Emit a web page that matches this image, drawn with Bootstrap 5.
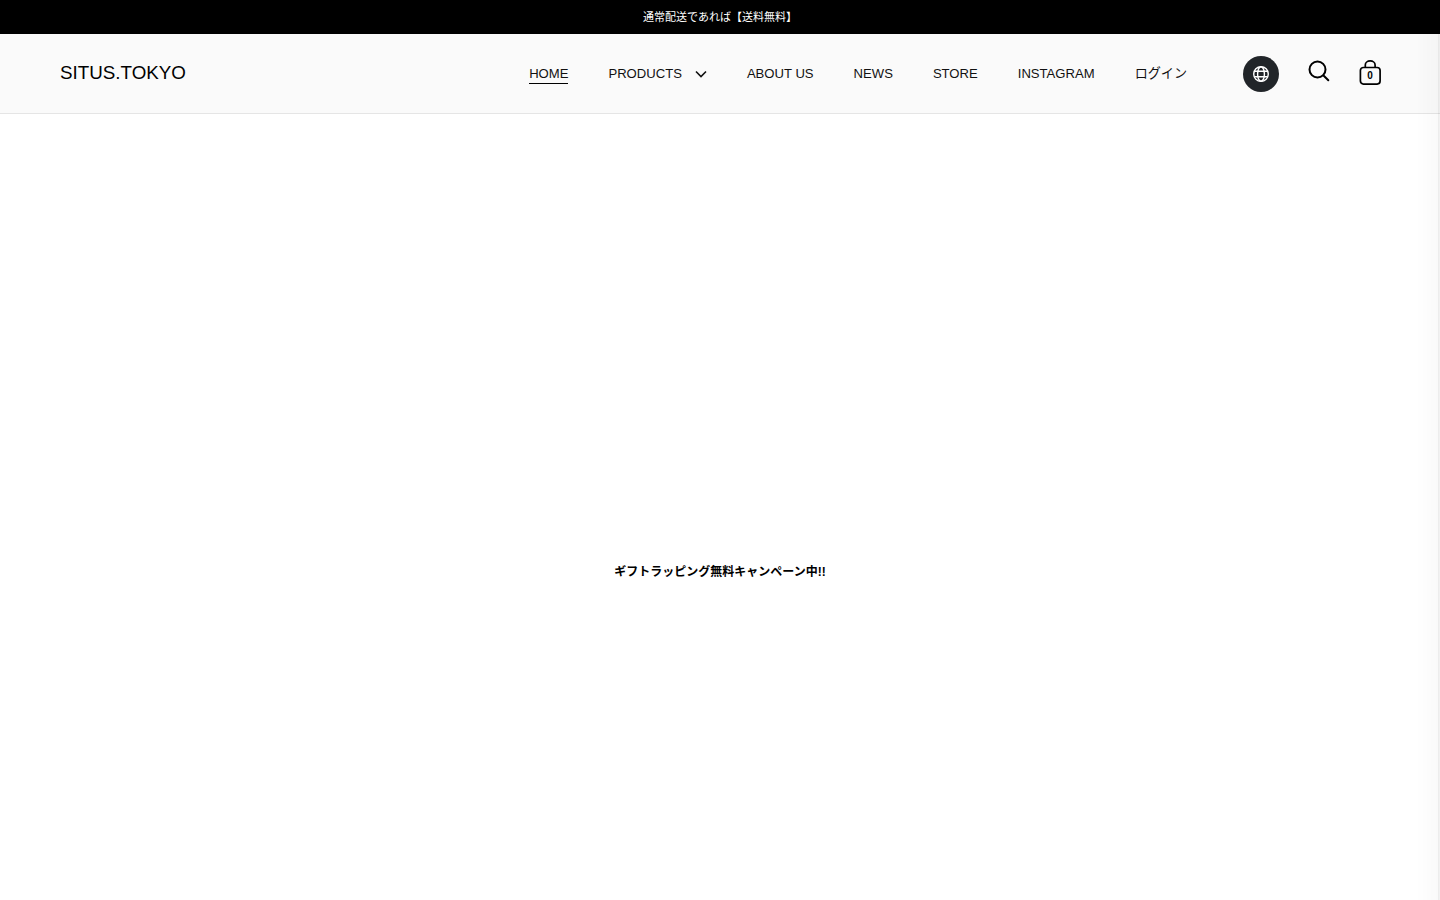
<!doctype html>
<html lang="ja"><head><meta charset="utf-8">
<link href="https://cdn.jsdelivr.net/npm/bootstrap@5.3.0/dist/css/bootstrap.min.css" rel="stylesheet">
<style>
html,body{height:100%}
body{font-family:"Liberation Sans","Noto Sans CJK JP",sans-serif;color:#000;background:#fff;overflow:hidden}
.promo{height:34px;background:#000;color:#fff;font-size:11px;line-height:33px;padding-top:1px}
.mast{height:80px;background:#fafafa;border-bottom:1px solid #e5e5e5;padding:0 58px 0 60px}
.logo{font-size:18.8px;color:#000;text-decoration:none;margin-top:-1px}
.menu{gap:40px;font-size:13.1px;margin-right:56px;margin-top:1px}
.menu a{color:#111;text-decoration:none;line-height:18px;display:inline-block;border-bottom:1px solid transparent}
.menu a.on{border-bottom-color:#000}
.chev{margin-left:13px;vertical-align:0}
.globe{width:36px;height:36px;background:#212529;border-radius:50%}
.tools{gap:29px}
.tool-search{margin-top:-5px}
.tool-bag{margin-top:-1px}
.edge-shade{position:fixed;top:34px;right:0;bottom:0;width:24px;pointer-events:none;background:linear-gradient(to right,rgba(0,0,0,0) 0,rgba(0,0,0,.02) 22px,rgba(0,0,0,.08) 22px,rgba(0,0,0,.04) 24px)}
.gift{height:786px;padding-top:449px;font-size:12px;font-weight:700;text-align:center}
</style></head><body>
<div class="promo text-center">通常配送であれば【送料無料】</div>
<header class="mast d-flex align-items-center">
<a class="logo" href="#">SITUS.TOKYO</a>
<nav class="menu d-flex align-items-center ms-auto">
<a class="on" href="#">HOME</a>
<a href="#">PRODUCTS<svg class="chev" width="12" height="8" viewBox="0 0 12 8" fill="none" stroke="#111" stroke-width="1.6"><path d="M1 1.5l5 5 5-5"/></svg></a>
<a href="#">ABOUT US</a><a href="#">NEWS</a><a href="#">STORE</a><a href="#">INSTAGRAM</a><a href="#">ログイン</a>
</nav>
<div class="tools d-flex align-items-center">
<span class="globe d-flex align-items-center justify-content-center"><svg width="18" height="18" viewBox="0 0 18 18" fill="none" stroke="#fff" stroke-width="1.4"><circle cx="9" cy="9" r="7.3"/><ellipse cx="9" cy="9" rx="3.4" ry="7.3"/><path d="M2.2 6.3h13.6M2.2 11.7h13.6"/></svg></span>
<svg class="tool-search" width="22" height="22" viewBox="0 0 22 22" fill="none" stroke="#000" stroke-width="2"><circle cx="9.5" cy="9.5" r="8"/><path d="M15.5 15.5l4.8 4.8" stroke-linecap="round"/></svg>
<svg class="tool-bag" width="23" height="26" viewBox="0 0 23 26" fill="none" stroke="#000" stroke-width="1.7"><rect x="1.4" y="7.5" width="19.7" height="16.6" rx="3"/><path d="M6.3 7.5V5a4.9 4.1 0 0 1 9.8 0V7.5"/><text x="11" y="18.6" font-size="10" font-weight="700" text-anchor="middle" fill="#000" stroke="none" font-family="Liberation Sans">0</text></svg>
</div>
</header>
<main class="gift">ギフトラッピング無料キャンペーン中!!</main>
<div class="edge-shade"></div>
<script src="https://cdn.jsdelivr.net/npm/bootstrap@5.3.0/dist/js/bootstrap.bundle.min.js"></script>
</body></html>
